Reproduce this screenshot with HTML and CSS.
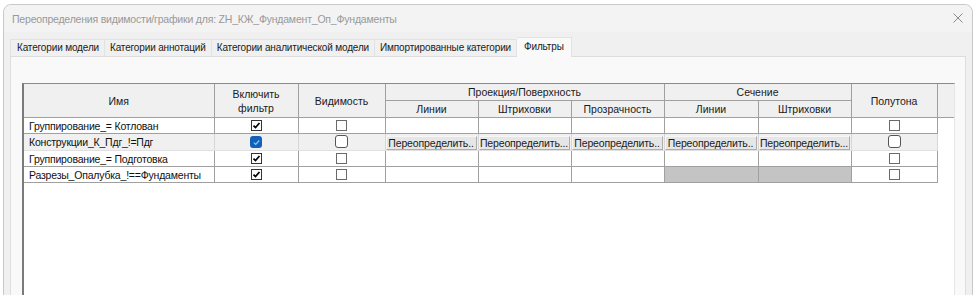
FILE: index.html
```html
<!DOCTYPE html>
<html lang="ru">
<head>
    <meta charset="UTF-8">
    <title>Переопределения видимости/графики</title>
    <link rel="stylesheet" href="styles.css">
</head>
<body>
    <div class="window">
        <div class="titlebar">
            <span class="title">Переопределения видимости/графики для: ZH_КЖ_Фундамент_Оп_Фундаменты</span>
            <svg class="close" width="10" height="10" viewBox="0 0 10 10"><path d="M0.5 0.5L9.5 9.5M9.5 0.5L0.5 9.5" stroke="#8a8a8a" stroke-width="1"/></svg>
        </div>

        <div class="tabs">
            <div class="tab">Категории модели</div>
            <div class="tab">Категории аннотаций</div>
            <div class="tab">Категории аналитической модели</div>
            <div class="tab">Импортированные категории</div>
            <div class="tab active">Фильтры</div>
        </div>

        <div class="panel">
            <div class="grid">
                <table class="filters">
                    <colgroup>
                        <col style="width:190px">
                        <col style="width:84px">
                        <col style="width:87px">
                        <col style="width:93px">
                        <col style="width:93px">
                        <col style="width:93px">
                        <col style="width:94px">
                        <col style="width:93px">
                        <col style="width:86px">
                        <col style="width:17px">
                    </colgroup>
                    <thead>
                        <tr class="head-top">
                            <th rowspan="2">Имя</th>
                            <th rowspan="2">Включить<br>фильтр</th>
                            <th rowspan="2">Видимость</th>
                            <th colspan="3">Проекция/Поверхность</th>
                            <th colspan="2">Сечение</th>
                            <th rowspan="2">Полутона</th>
                            <th rowspan="2" class="spare"></th>
                        </tr>
                        <tr class="head-sub">
                            <th>Линии</th>
                            <th>Штриховки</th>
                            <th>Прозрачность</th>
                            <th>Линии</th>
                            <th>Штриховки</th>
                        </tr>
                    </thead>
                    <tbody>
                        <tr>
                            <td class="name">Группирование_= Котлован</td>
                            <td class="c"><span class="cb on"><svg viewBox="0 0 9 9"><path d="M1.5 4.6l2 2 4-4.6" /></svg></span></td>
                            <td class="c"><span class="cb"></span></td>
                            <td></td><td></td><td></td><td></td><td></td>
                            <td class="c"><span class="cb"></span></td>
                        </tr>
                        <tr class="current">
                            <td class="name">Конструкции_К_Пдг_!=Пдг</td>
                            <td class="c"><span class="cb blue"><svg viewBox="0 0 9 9"><path d="M1.8 4.6l1.9 1.9 3.6-4" /></svg></span></td>
                            <td class="c"><span class="cb round"></span></td>
                            <td class="btn-cell"><span class="btn">Переопределить..</span></td>
                            <td class="btn-cell"><span class="btn">Переопределить...</span></td>
                            <td class="btn-cell"><span class="btn">Переопределить..</span></td>
                            <td class="btn-cell"><span class="btn">Переопределить..</span></td>
                            <td class="btn-cell"><span class="btn">Переопределить...</span></td>
                            <td class="c"><span class="cb round"></span></td>
                        </tr>
                        <tr>
                            <td class="name">Группирование_= Подготовка</td>
                            <td class="c"><span class="cb on"><svg viewBox="0 0 9 9"><path d="M1.5 4.6l2 2 4-4.6" /></svg></span></td>
                            <td class="c"><span class="cb"></span></td>
                            <td></td><td></td><td></td><td></td><td></td>
                            <td class="c"><span class="cb"></span></td>
                        </tr>
                        <tr>
                            <td class="name">Разрезы_Опалубка_!==Фундаменты</td>
                            <td class="c"><span class="cb on"><svg viewBox="0 0 9 9"><path d="M1.5 4.6l2 2 4-4.6" /></svg></span></td>
                            <td class="c"><span class="cb"></span></td>
                            <td></td><td></td><td></td>
                            <td class="hatch"></td><td class="hatch"></td>
                            <td class="c"><span class="cb"></span></td>
                        </tr>
                    </tbody>
                </table>
            </div>
        </div>
    </div>
</body>
</html>
```

FILE: styles.css
```css
html, body {
    margin: 0;
    height: 100%;
    overflow: hidden;
}

body {
    background-color: #ffffff;
    font-family: "Liberation Sans", Arial, sans-serif;
    color: #1a1a1a;
}

.window {
    margin: 4px 1px 0 3px;
    height: calc(100% + 10px);
    border: 1px solid #c9c9c9;
    border-radius: 8px 8px 0 0;
    background-color: #f0f0f0;
    display: flex;
    flex-direction: column;
    box-sizing: border-box;
}

.titlebar {
    height: 27px;
    flex: none;
    display: flex;
    align-items: center;
    justify-content: space-between;
    padding: 0 9px 0 8px;
    background-color: #f3f3f3;
    border-radius: 8px 8px 0 0;
}

.title {
    font-size: 10.5px;
    letter-spacing: -0.2px;
    color: #999999;
}

.close {
    margin-top: -2px;
}

.tabs {
    display: flex;
    align-items: flex-end;
    height: 24px;
    padding-left: 6px;
    flex: none;
}

.tab {
    font-size: 10px;
    letter-spacing: -0.15px;
    height: 17px;
    line-height: 16px;
    padding: 0 5px;
    border: 1px solid #e2e2e2;
    border-bottom: none;
    border-left: none;
    background-color: #f0f0f0;
    white-space: nowrap;
    box-sizing: border-box;
}

.tab:first-child {
    border-left: 1px solid #e2e2e2;
    padding-left: 6px;
}

.tab.active {
    height: 20px;
    line-height: 18px;
    padding: 0 7px;
    background-color: #f9f9f9;
    margin-bottom: -1px;
    position: relative;
}

.panel {
    flex: 1;
    margin: 0 6px 0 6px;
    border: 1px solid #dedede;
    background-color: #f9f9f9;
    padding: 26px 11px 0 11px;
    display: flex;
}

.grid {
    flex: 1;
    background-color: #ffffff;
    border-left: 2px solid #7a7a7a;
    border-top: 1px solid #8a8a8a;
    border-right: 1px solid #e6e6e6;
}

.filters {
    border-collapse: collapse;
    table-layout: fixed;
    width: 930px;
    font-size: 10.5px;
}

.filters th {
    background-color: #f0f0f0;
    font-weight: normal;
    border: 1px solid #a0a0a0;
    border-top: none;
    padding: 0;
    text-align: center;
    line-height: 14px;
}

.filters th:first-child {
    border-left: none;
}

.head-top th {
    height: 16px;
}

.head-sub th {
    height: 16px;
}

.filters th.spare {
    border-right: none;
}

.filters td {
    height: 15px;
    padding: 0;
    border: 1px solid #a0a0a0;
    line-height: 14px;
    white-space: nowrap;
    overflow: hidden;
}

.filters td:first-child {
    border-left: none;
}

.name {
    padding-left: 5px !important;
    letter-spacing: -0.2px;
    color: #111111;
}

.c {
    text-align: center;
}

.current td {
    background-color: #f0f0f0;
    border-color: #e0e0e0 #d6d6d6;
}

.current td.name {
    border-left: none;
}

.cb {
    display: inline-block;
    width: 11px;
    height: 11px;
    border: 1px solid #6a6a6a;
    background-color: #ffffff;
    box-sizing: border-box;
    vertical-align: middle;
    position: relative;
    top: -1px;
}

.cb svg {
    display: block;
    width: 9px;
    height: 9px;
}

.cb svg path {
    fill: none;
    stroke: #000000;
    stroke-width: 1.7;
}

.cb.on {
    border-color: #333333;
}

.cb.blue {
    width: 12px;
    height: 12px;
    border: none;
    border-radius: 3px;
    background-color: #0f62b8;
    padding: 1.5px;
}

.cb.blue svg path {
    stroke: #9cc3ee;
    stroke-width: 1.2;
}

.cb.round {
    width: 13px;
    height: 13px;
    border-radius: 3px;
    border-color: #555555;
}

.btn-cell {
    padding: 1px 1px 0 0 !important;
}

.btn {
    display: flex;
    justify-content: center;
    height: 12px;
    line-height: 12px;
    background-color: #e6e6e6;
    border: 1px solid #adadad;
    border-top-color: #f6f6f6;
    border-left-color: #f6f6f6;
    overflow: hidden;
    white-space: nowrap;
    letter-spacing: -0.15px;
}

.hatch {
    background: repeating-conic-gradient(#b0b0b0 0 25%, #d8d8d8 0 50%) 0 0 / 2px 2px;
    border-color: #a8a8a8;
}
```
